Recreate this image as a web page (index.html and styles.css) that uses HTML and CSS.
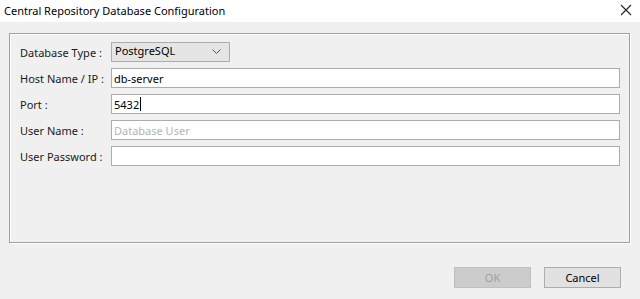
FILE: index.html
```html
<!DOCTYPE html>
<html>
<head>
    <title>Central Repository Database Configuration</title>
    <link rel="stylesheet" href="styles.css">
</head>
<body>
    <div id="dialog">
        <header class="titlebar">
            <span class="title">Central Repository Database Configuration</span>
            <svg class="close" width="12" height="12" viewBox="0 0 12 12">
                <path d="M1 1 L11 11 M11 1 L1 11" stroke="#222" stroke-width="1.1" fill="none"/>
            </svg>
        </header>

        <div class="panel">
            <div class="form">
                <label>Database Type :</label>
                <div class="combo">
                    <span>PostgreSQL</span>
                    <svg width="9" height="6" viewBox="0 0 9 6">
                        <path d="M0.5 0.5 L4.5 4.5 L8.5 0.5" stroke="#555" stroke-width="1" fill="none"/>
                    </svg>
                </div>

                <label>Host Name / IP :</label>
                <div class="field">db-server</div>

                <label>Port :</label>
                <div class="field">5432<span class="caret"></span></div>

                <label>User Name :</label>
                <div class="field hint">Database User</div>

                <label>User Password :</label>
                <div class="field"></div>
            </div>
        </div>

        <footer class="buttons">
            <button class="disabled">OK</button>
            <button>Cancel</button>
        </footer>
    </div>
</body>
</html>
```

FILE: styles.css
```css
html, body {
    margin: 0;
    padding: 0;
}

body {
    background: #f0f0f0;
    font-family: 'Noto Sans', 'Open Sans', sans-serif;
    font-size: 11px;
    color: #000;
}

#dialog {
    width: 640px;
    height: 299px;
    display: flex;
    flex-direction: column;
}

.titlebar {
    height: 22px;
    background: #fff;
    display: flex;
    align-items: center;
    justify-content: space-between;
    padding: 0 8px 0 4px;
    box-sizing: border-box;
}
.title {
    font-size: 11px;
    color: #000;
    position: relative;
    top: -1px;
}
.close {
    margin-top: -2px;
}

.panel {
    margin: 11px 10px 0 9px;
    height: 210px;
    box-sizing: border-box;
    border: 1px solid #a0a0a0;
    box-shadow: inset 1px 1px 0 #fff, 1px 1px 0 #fff;
    padding: 8px 9px 0 10px;
}

.form {
    display: grid;
    grid-template-columns: 91px 1fr;
    grid-auto-rows: 20px;
    row-gap: 6px;
    align-items: center;
}
.form label {
    color: #1a1a1a;
    white-space: nowrap;
}

.combo {
    width: 119px;
    height: 20px;
    box-sizing: border-box;
    background: #e5e5e5;
    border: 1px solid #acacac;
    display: flex;
    align-items: center;
    justify-content: space-between;
    padding: 0 8px 0 3px;
}
.combo span {
    position: relative;
    top: -2px;
}

.field {
    height: 20px;
    box-sizing: border-box;
    background: #fff;
    border: 1px solid #acacac;
    padding: 0 2px;
    line-height: 17px;
    display: flex;
    align-items: center;
}
.field.hint {
    color: #b4b4b4;
}
.caret {
    display: inline-block;
    width: 1px;
    height: 14px;
    background: #000;
    margin-left: 1px;
}

.buttons {
    display: flex;
    justify-content: flex-end;
    gap: 13px;
    padding: 24px 19px 0 0;
}
button {
    width: 77px;
    height: 21px;
    font-family: 'Noto Sans', 'Open Sans', sans-serif;
    font-size: 11px;
    background: #e1e1e1;
    border: 1px solid #adadad;
    color: #000;
    padding: 0;
}
button.disabled {
    background: #cccccc;
    border-color: #bfbfbf;
    color: #a0a0a0;
}
```
